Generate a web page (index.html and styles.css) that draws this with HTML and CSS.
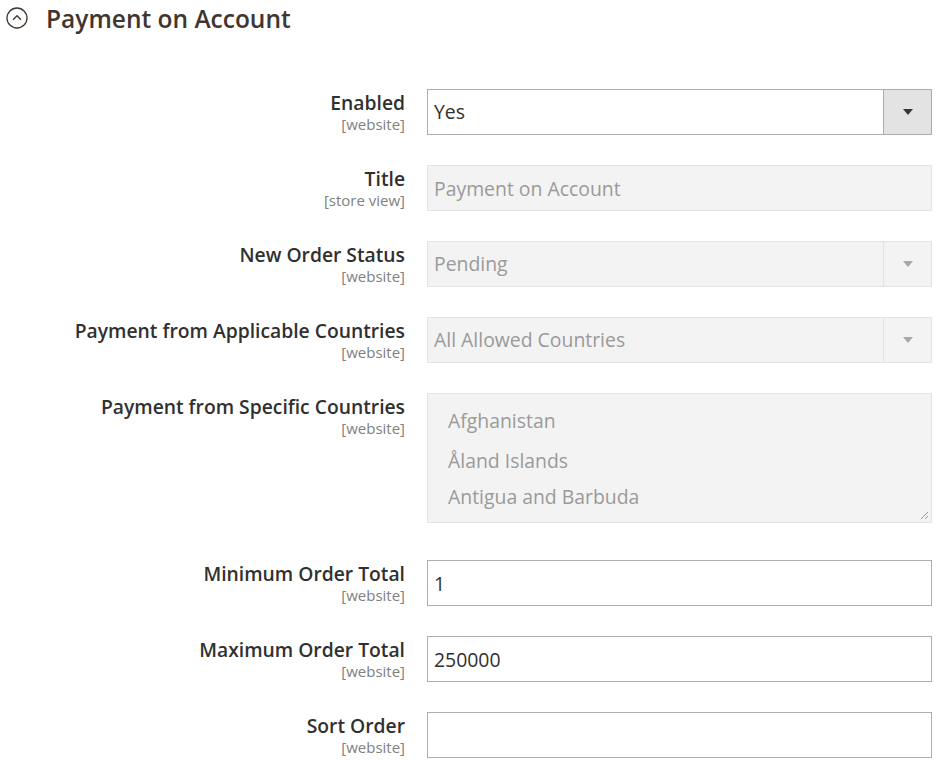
FILE: index.html
```html
<!DOCTYPE html>
<html lang="en">

<head>
  <meta charset="UTF-8">
  <meta name="viewport" content="width=device-width, initial-scale=1.0">
  <link rel="stylesheet" href="styles.css">
  <title>Payment on Account</title>
</head>

<body>
  <div class="section-head">
    <svg class="toggle" width="22" height="22" viewBox="0 0 22 22">
      <circle cx="11" cy="11" r="10" fill="none" stroke="#41362f" stroke-width="1.3" />
      <path d="M7 12.8 L11 8.8 L15 12.8" fill="none" stroke="#41362f" stroke-width="1.4" />
    </svg>
    <h2 class="section-title">Payment on Account</h2>
  </div>

  <div class="form">
    <div class="row">
      <div class="label">
        <div class="label-name">Enabled</div>
        <div class="scope">[website]</div>
      </div>
      <div class="control select">
        <div class="select-value">Yes</div>
        <div class="select-btn"><span class="arrow"></span></div>
      </div>
    </div>

    <div class="row">
      <div class="label">
        <div class="label-name">Title</div>
        <div class="scope">[store view]</div>
      </div>
      <input class="control text disabled" type="text" value="Payment on Account" disabled>
    </div>

    <div class="row">
      <div class="label">
        <div class="label-name">New Order Status</div>
        <div class="scope">[website]</div>
      </div>
      <div class="control select disabled">
        <div class="select-value">Pending</div>
        <div class="select-btn"><span class="arrow"></span></div>
      </div>
    </div>

    <div class="row">
      <div class="label">
        <div class="label-name">Payment from Applicable Countries</div>
        <div class="scope">[website]</div>
      </div>
      <div class="control select disabled">
        <div class="select-value">All Allowed Countries</div>
        <div class="select-btn"><span class="arrow"></span></div>
      </div>
    </div>

    <div class="row row-multi">
      <div class="label">
        <div class="label-name">Payment from Specific Countries</div>
        <div class="scope">[website]</div>
      </div>
      <div class="control multi disabled">
        <div class="option first">Afghanistan</div>
        <div class="option">Åland Islands</div>
        <div class="option">Antigua and Barbuda</div>
        <svg class="grip" width="9" height="9" viewBox="0 0 9 9">
          <path d="M8 1 L1 8 M8 5 L5 8" stroke="#9a9a9a" stroke-width="1" />
        </svg>
      </div>
    </div>

    <div class="row">
      <div class="label">
        <div class="label-name">Minimum Order Total</div>
        <div class="scope">[website]</div>
      </div>
      <input class="control text" type="text" value="1">
    </div>

    <div class="row">
      <div class="label">
        <div class="label-name">Maximum Order Total</div>
        <div class="scope">[website]</div>
      </div>
      <input class="control text" type="text" value="250000">
    </div>

    <div class="row">
      <div class="label">
        <div class="label-name">Sort Order</div>
        <div class="scope">[website]</div>
      </div>
      <input class="control text" type="text" value="">
    </div>
  </div>
</body>

</html>
```

FILE: styles.css
```css
body {
  margin: 0;
  background: #fff;
  color: #303030;
  font-family: 'Open Sans', sans-serif;
}

.section-head {
  display: flex;
  align-items: center;
  height: 36px;
  padding-left: 6px;
  gap: 18px;
}

.section-title {
  margin: 0;
  font-size: 24.5px;
  font-weight: 600;
  color: #41362f;
}

.form {
  margin-top: 53px;
}

.row {
  display: flex;
  gap: 22px;
  margin-bottom: 30px;
}

.row-multi {
  margin-bottom: 37px;
}

.label {
  width: 405px;
  text-align: right;
  padding-top: 3px;
}

.label-name {
  font-size: 19.3px;
  font-weight: 600;
  line-height: 22px;
  color: #303030;
}

.scope {
  font-size: 15px;
  line-height: 20px;
  color: #808080;
}

.control {
  width: 505px;
  height: 46px;
  box-sizing: border-box;
  border: 1px solid #adadad;
  background: #fff;
  font-family: 'Open Sans', sans-serif;
  font-size: 19.4px;
  color: #303030;
}

.text {
  margin: 0;
  padding: 0 6px;
  outline: none;
}

.select {
  display: flex;
}

.select-value {
  flex: 1;
  padding: 0 6px;
  line-height: 44px;
}

.select-btn {
  width: 47px;
  border-left: 1px solid #adadad;
  background: #e3e3e3;
  display: flex;
  align-items: center;
  justify-content: center;
}

.arrow {
  width: 0;
  height: 0;
  border-left: 5px solid transparent;
  border-right: 5px solid transparent;
  border-top: 6px solid #41362f;
}

.disabled {
  background: #f3f3f3;
  border-color: #e3e3e3;
  color: #9a9a9a;
}

.disabled .select-btn {
  background: #f3f3f3;
  border-left-color: #e3e3e3;
}

.disabled .arrow {
  border-top-color: #a8a8a8;
}

.multi {
  height: 130px;
  position: relative;
  padding: 9px 20px;
}

.option {
  line-height: 36px;
}

.option.first {
  margin-bottom: 4px;
}

.grip {
  position: absolute;
  right: 2px;
  bottom: 2px;
}
```
